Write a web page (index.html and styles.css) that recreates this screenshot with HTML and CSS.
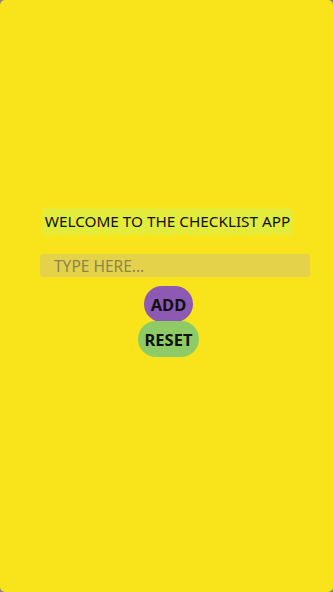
FILE: index.html
```html
<!DOCTYPE html>
<html>
<head>
<meta charset="utf-8">
<link rel="stylesheet" href="styles.css">
</head>
<body>
<main class="app">
  <h1 class="title">WELCOME TO THE CHECKLIST APP</h1>
  <input class="entry" type="text" placeholder="TYPE HERE...">
  <div class="actions">
    <button class="btn btn-add">ADD</button>
    <button class="btn btn-reset">RESET</button>
  </div>
</main>
</body>
</html>
```
FILE: styles.css
```css
html {
  background: #8a7f8c;
  height: 100%;
}
body {
  margin: 0;
  height: 100%;
  background: #f9e41c;
  border-radius: 5px;
  font-family: "Noto Sans", "Open Sans", sans-serif;
}
.app {
  display: flex;
  flex-direction: column;
  align-items: center;
  padding-top: 209px;
}
.title {
  margin: 0 0 20px 2px;
  font-size: 15.3px;
  font-weight: 400;
  line-height: 25px;
  padding: 0 2px;
  color: #111;
  background: #e3ec3c;
  box-shadow: 0 0 4px #e3ec3c;
}
.entry {
  box-sizing: border-box;
  width: 270px;
  height: 23px;
  margin: 0 0 9px 17px;
  border: none;
  border-radius: 3px;
  background: #e3d24a;
  padding: 0 14px;
  font-family: inherit;
  font-size: 15.5px;
  color: #333;
  outline: none;
}
.entry::placeholder {
  color: #8f8450;
}
.actions {
  display: flex;
  flex-direction: column;
  align-items: center;
  margin-left: 4px;
}
.btn {
  border: none;
  font-family: inherit;
  font-weight: 700;
  font-size: 16.5px;
  color: #111;
  height: 36px;
  border-radius: 18px;
  padding: 0;
}
.btn-add {
  width: 49px;
  background: #8d59b3;
}
.btn-reset {
  width: 61px;
  background: #8ecb67;
  margin-top: -1px;
}
```
